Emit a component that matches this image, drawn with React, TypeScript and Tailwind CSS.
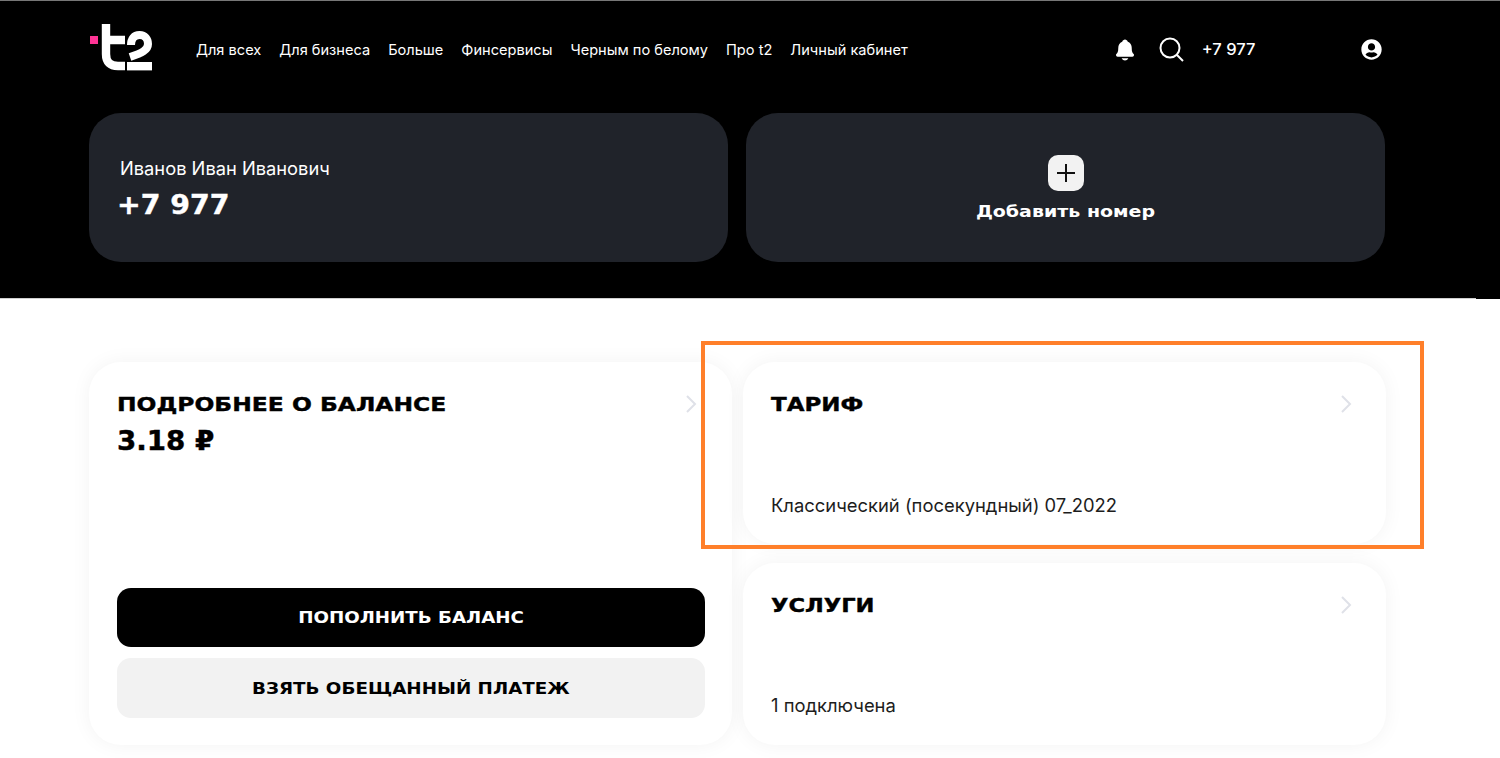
import { IoNotifications } from "react-icons/io5";
import { FaUserCircle } from "react-icons/fa";

const navItems = ["Для всех", "Для бизнеса", "Больше", "Финсервисы", "Черным по белому", "Про t2", "Личный кабинет"];

function Logo() {
  return (
    <svg width="64" height="47" viewBox="0 0 64 47" fill="none">
      <rect x="1" y="12" width="8" height="8" fill="#ff3495" />
      <path d="M17 0V30Q17 42 29 42H36M13 16H36" stroke="#fff" strokeWidth="8.4" />
      <path d="M42 21C42 15 45 11 50.5 11C56 11 59 15 59 20C59 26 53 29 41 33" stroke="#fff" strokeWidth="8" />
      <rect x="38" y="38" width="25" height="8.4" fill="#fff" />
    </svg>
  );
}

function Chevron() {
  return (
    <svg width="12" height="20" viewBox="0 0 12 20" fill="none">
      <path d="M2 2L10 10L2 18" stroke="#dfe1e8" strokeWidth="2" />
    </svg>
  );
}

function InfoCard({ title, text, wide, gap }: { title: string; text: string; wide: string; gap: string }) {
  return (
    <div className="h-[182px] w-[643px] rounded-[32px] bg-white pl-[28px] pr-[34px] pt-[29px] shadow-[0_0_20px_rgba(0,0,0,0.05)]">
      <div className="flex items-center justify-between">
        <h2 className={`origin-left font-['DejaVu_Sans'] text-[20px] font-bold leading-[26px] text-black [-webkit-text-stroke:0.4px_black] ${wide}`}>{title}</h2>
        <Chevron />
      </div>
      <p className={`font-['Inter'] text-[18.4px] leading-[24px] text-[#1d1d1d] ${gap}`}>{text}</p>
    </div>
  );
}

export default function App() {
  return (
    <div className="relative h-[758px] w-[1500px] overflow-hidden bg-white font-['Inter',sans-serif]">
      {/* Header */}
      <div className="h-[298px] border-t border-[#777] bg-black pl-[89px]">
        <div className="flex h-[70px] items-end">
          <Logo />
          <nav className="mb-[12px] ml-[43px] flex gap-[18px] text-[14.6px] leading-[18px] text-white">
            {navItems.map((item) => (
              <span key={item}>{item}</span>
            ))}
          </nav>
          <div className="mb-[9px] ml-[205px] flex items-center text-white">
            <IoNotifications size={24} />
            <svg className="ml-[22px]" width="25" height="25" viewBox="0 0 25 25" fill="none">
              <circle cx="11" cy="11" r="9.5" stroke="#fff" strokeWidth="2" />
              <path d="M18 18L24 24" stroke="#fff" strokeWidth="2" />
            </svg>
            <span className="ml-[18px] w-[159px] text-[16.5px] font-medium">+7 977</span>
            <FaUserCircle size={21} />
          </div>
        </div>
        <div className="mt-[42px] flex gap-[18px]">
          <div className="flex h-[149px] w-[639px] flex-col rounded-[32px] bg-[#20232a] pl-[30px] pt-[45px] text-white">
            <span className="pl-[1px] text-[18.3px] leading-[20px]">Иванов Иван Иванович</span>
            <span className="-ml-[2px] mt-[11px] origin-left scale-x-[1.09] font-['DejaVu_Sans'] text-[26px] font-bold leading-[32px] [-webkit-text-stroke:0.4px_white]">+7 977</span>
          </div>
          <div className="flex h-[149px] w-[639px] flex-col items-center rounded-[32px] bg-[#20232a] pt-[42px] text-white">
            <div className="flex h-[36px] w-[36px] items-center justify-center rounded-[10px] bg-[#f2f2f2]">
              <svg width="20" height="20" viewBox="0 0 20 20" fill="none">
                <path d="M10 1V19M1 10H19" stroke="#111" strokeWidth="2" />
              </svg>
            </div>
            <span className="mt-[10px] scale-x-[1.187] font-['DejaVu_Sans'] text-[16px] font-bold leading-[22px]">Добавить номер</span>
          </div>
        </div>
      </div>
      <div className="flex h-px">
        <div className="w-[1476px] bg-[#cfcfcf]" />
        <div className="flex-1 bg-black" />
      </div>

      {/* Cards */}
      <div className="ml-[89px] mt-[63px] flex gap-[11px]">
        <div className="flex h-[383px] w-[643px] flex-col rounded-[32px] bg-white pl-[28px] pr-[27px] pt-[29px] shadow-[0_0_20px_rgba(0,0,0,0.05)]">
          <div className="flex items-center justify-between pr-[8px]">
            <h2 className="origin-left scale-x-[1.17] font-['DejaVu_Sans'] text-[20px] font-bold leading-[26px] text-black [-webkit-text-stroke:0.4px_black]">ПОДРОБНЕЕ О БАЛАНСЕ</h2>
            <Chevron />
          </div>
          <p className="mt-[7px] origin-left scale-x-[1.066] font-['DejaVu_Sans'] text-[26px] font-bold leading-[34px] text-black [-webkit-text-stroke:0.4px_black]">3.18 ₽</p>
          <button className="mt-[130px] h-[59px] rounded-[14px] bg-black font-['DejaVu_Sans'] text-[16px] font-bold text-white">
            <span className="inline-block scale-x-[1.14]">ПОПОЛНИТЬ БАЛАНС</span>
          </button>
          <button className="mt-[11px] h-[60px] rounded-[14px] bg-[#f2f2f2] pt-[1px] font-['DejaVu_Sans'] text-[16px] font-bold text-black">
            <span className="inline-block scale-x-[1.144]">ВЗЯТЬ ОБЕЩАННЫЙ ПЛАТЕЖ</span>
          </button>
        </div>
        <div className="flex flex-col gap-[19px]">
          <InfoCard title="ТАРИФ" text="Классический (посекундный) 07_2022" wide="scale-x-[1.148]" gap="mt-[76px]" />
          <InfoCard title="УСЛУГИ" text="1 подключена" wide="scale-x-[1.13]" gap="mt-[75px]" />
        </div>
      </div>

      {/* Annotation frame */}
      <div className="absolute left-[701px] top-[341px] h-[208px] w-[723px] border-[4px] border-[#ff7f2a]" />
    </div>
  );
}
